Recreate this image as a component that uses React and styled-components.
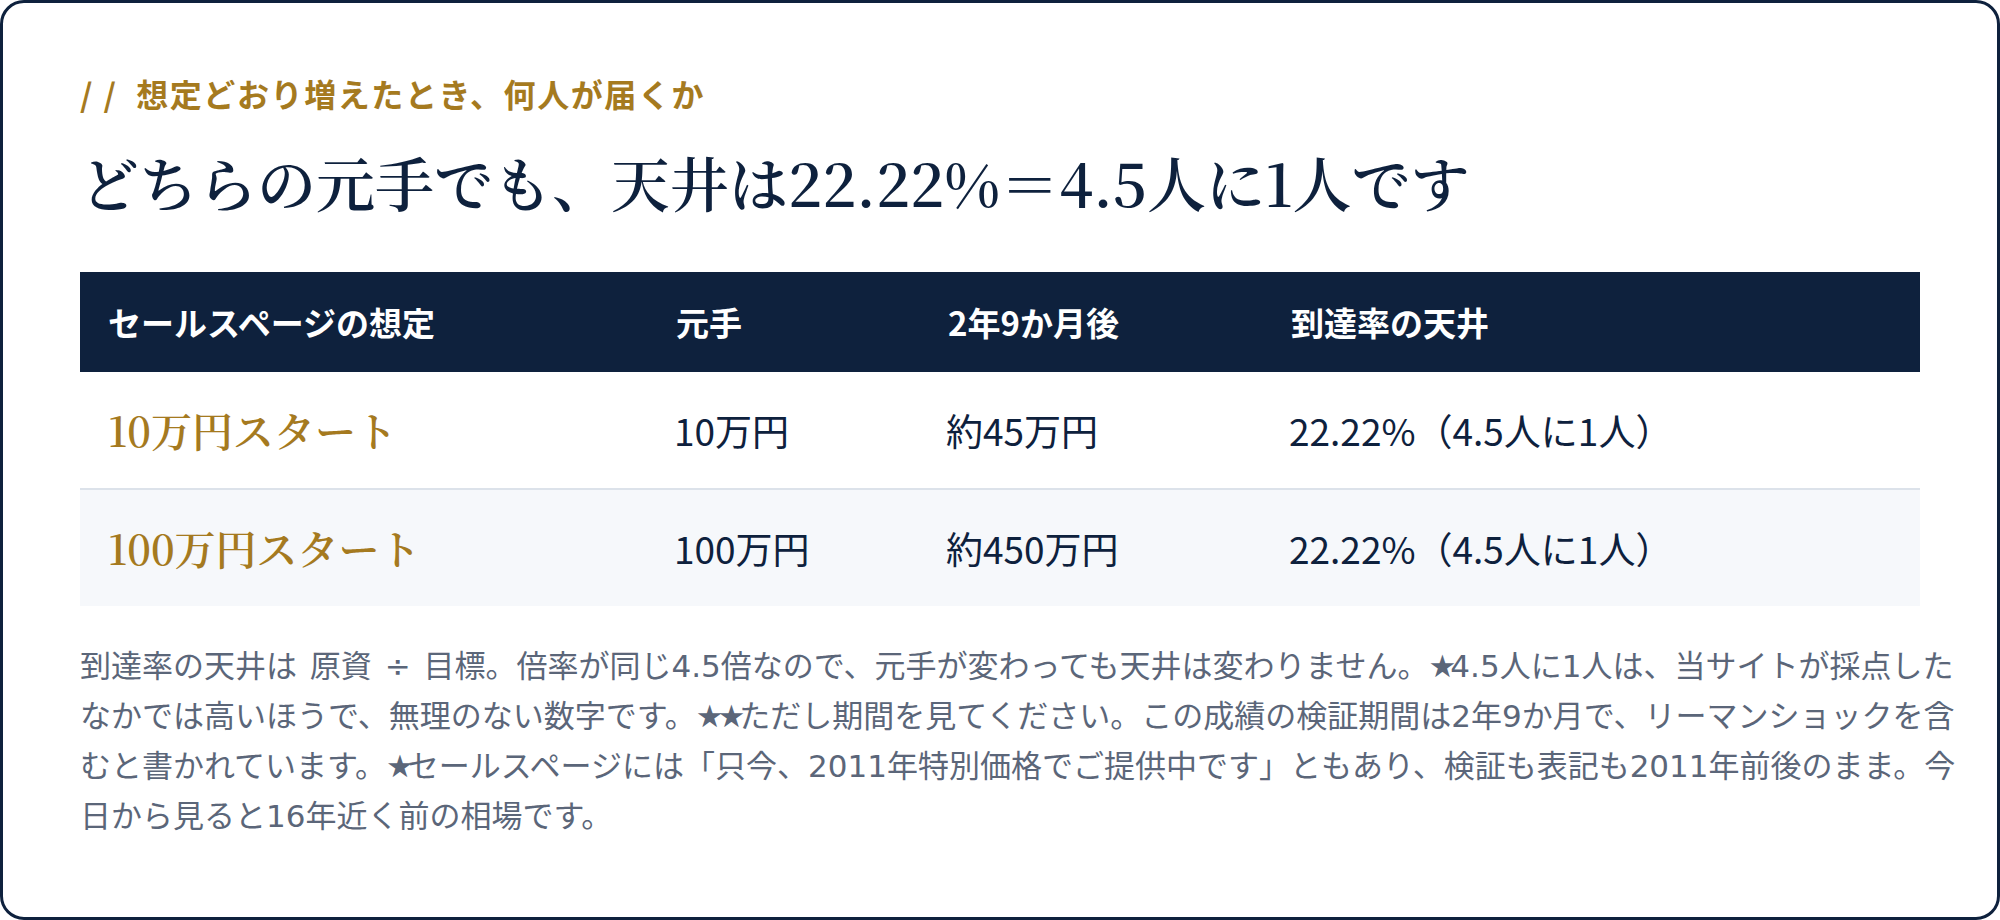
import React from 'react';
import styled, { createGlobalStyle } from 'styled-components';

const GlobalStyle = createGlobalStyle`
  html, body {
    margin: 0;
    padding: 0;
    background: #ffffff;
  }
  * {
    box-sizing: border-box;
  }
`

const SANS = `"Noto Sans CJK JP", "Noto Sans", sans-serif`
const TEXT = `"DejaVu Sans", "Noto Sans CJK JP", sans-serif`
const SERIF = `"Noto Serif CJK JP", "Noto Serif JP", "Liberation Serif", "Noto Sans CJK JP", serif`

const Card = styled.section`
  width: 100%;
  min-height: 918px;
  border: 3px solid #0e213d;
  border-radius: 24px;
  padding: 72px 26px 76px 77px;
  background: #fff;
  font-family: ${SANS};
`

const Eyebrow = styled.div`
  font-size: 32px;
  line-height: 36px;
  font-weight: 700;
  letter-spacing: 0.05em;
  color: #a57a1f;
`

const Slashes = styled.span`
  letter-spacing: 0.35em;
  margin-right: 9px;
`

const Title = styled.h2`
  margin: 33px 0 53px;
  font-family: ${SERIF};
  font-weight: 600;
  font-size: 59px;
  line-height: 75px;
  color: #0e213d;
`

const Table = styled.table`
  width: 1840px;
  border-collapse: collapse;
  table-layout: fixed;
`

const HeadCell = styled.th`
  background: #0e213d;
  color: #fff;
  text-align: left;
  font-size: 33px;
  line-height: 50px;
  font-weight: 700;
  padding: 25px 28px;
`

const Row = styled.tr`
  background: ${p => (p.$shaded ? '#f6f8fb' : '#fff')};
  border-bottom: ${p => (p.$last ? 'none' : '2px solid #dce2ea')};
`

const Cell = styled.td`
  padding: 33px 28px 33px 26px;
  font-size: 37px;
  line-height: 50px;
  color: #0e213d;
`

const PlanCell = styled(Cell)`
  padding-left: 28px;
  font-family: ${SERIF};
  font-size: 41px;
  font-weight: 600;
  color: #a57a1f;
`

const Note = styled.p`
  margin: 35px 0 0;
  font-family: ${TEXT};
  font-size: 31px;
  line-height: 50px;
  word-spacing: 3px;
  color: #5b6679;
`

const Star = styled.span`
  letter-spacing: -6px;
`

const columns = [
  { label: 'セールスページの想定', width: 568 },
  { label: '元手', width: 272 },
  { label: '2年9か月後', width: 343 },
  { label: '到達率の天井', width: 657 },
]

const rows = [
  { plan: '10万円スタート', start: '10万円', after: '約45万円', ceiling: '22.22%（4.5人に1人）' },
  { plan: '100万円スタート', start: '100万円', after: '約450万円', ceiling: '22.22%（4.5人に1人）' },
]

function App() {
  return (
    <>
      <GlobalStyle />
      <Card>
        <Eyebrow><Slashes>//</Slashes>想定どおり増えたとき、何人が届くか</Eyebrow>
        <Title>どちらの元手でも、天井は22.22%＝4.5人に1人です</Title>

        <Table>
          <colgroup>
            {columns.map(col => <col key={col.label} style={{ width: col.width }} />)}
          </colgroup>
          <thead>
            <tr>
              {columns.map(col => <HeadCell key={col.label}>{col.label}</HeadCell>)}
            </tr>
          </thead>
          <tbody>
            {rows.map((row, i) => (
              <Row key={row.plan} $shaded={i % 2 === 1} $last={i === rows.length - 1}>
                <PlanCell>{row.plan}</PlanCell>
                <Cell>{row.start}</Cell>
                <Cell>{row.after}</Cell>
                <Cell>{row.ceiling}</Cell>
              </Row>
            ))}
          </tbody>
        </Table>

        <Note>
          到達率の天井は 原資 ÷ 目標。倍率が同じ4.5倍なので、元手が変わっても天井は変わりません。<Star>★</Star>4.5人に1人は、当サイトが採点したなかでは高いほうで、無理のない数字です。<Star>★</Star><Star>★</Star>ただし期間を見てください。この成績の検証期間は2年9か月で、リーマンショックを含むと書かれています。<Star>★</Star>セールスページには「只今、2011年特別価格でご提供中です」ともあり、検証も表記も2011年前後のまま。今日から見ると16年近く前の相場です。
        </Note>
      </Card>
    </>
  );
}

export default App;
